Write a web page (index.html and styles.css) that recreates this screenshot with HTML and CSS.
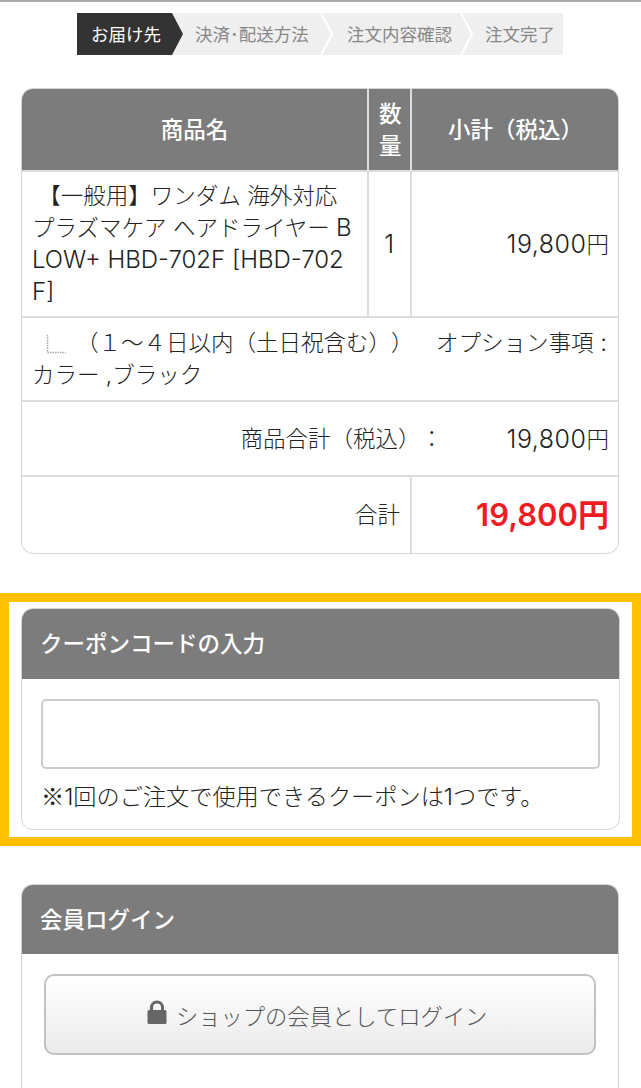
FILE: index.html
```html
<!DOCTYPE html>
<html lang="ja">
<head>
    <meta charset="UTF-8">
    <meta name="viewport" content="width=device-width, initial-scale=1.0">
    <title>ご注文手続き</title>
    <link rel="stylesheet" href="styles.css">
</head>
<body>
    <ol class="steps">
        <li class="step step-current">お届け先</li>
        <li class="step step-pay">決済･配送方法<svg class="chevron" width="14" height="42" viewBox="0 0 14 42"><path d="M1 0L12 21L1 42" fill="none" stroke="#fff" stroke-width="2"/></svg></li>
        <li class="step step-confirm">注文内容確認<svg class="chevron" width="14" height="42" viewBox="0 0 14 42"><path d="M1 0L12 21L1 42" fill="none" stroke="#fff" stroke-width="2"/></svg></li>
        <li class="step step-done">注文完了</li>
    </ol>

    <div class="cart-wrap">
        <table class="cart">
            <tr class="cart-head">
                <th class="col-name">商品名</th>
                <th class="col-qty">数量</th>
                <th class="col-price">小計（税込）</th>
            </tr>
            <tr class="row-item">
                <td class="item-name">&nbsp;【一般用】ワンダム 海外対応プラズマケア ヘアドライヤー <span class="en">B</span><span class="en">LOW+ HBD-702F [HBD-702F]</span></td>
                <td class="item-qty"><span class="digits">1</span></td>
                <td class="num"><span class="digits">19,800</span>円</td>
            </tr>
            <tr class="row-option">
                <td colspan="3"><svg class="tree" width="20" height="20" viewBox="0 0 20 20"><path d="M1.500 1V18.500H20" fill="none" stroke="#aaa" stroke-width="1.500" stroke-dasharray="1.500 1"/></svg>（１～４日以内（土日祝含む））　オプション事項<span class="en"> : </span>カラー ,ブラック</td>
            </tr>
            <tr class="row-subtotal">
                <td colspan="3">
                    <div class="sub-row">
                        <span>商品合計（税込）：</span>
                        <span class="sub-price"><span class="digits">19,800</span>円</span>
                    </div>
                </td>
            </tr>
            <tr class="row-total">
                <td colspan="2" class="num">合計</td>
                <td class="num total-price">19,800円</td>
            </tr>
        </table>
    </div>

    <div class="coupon-box">
        <section class="panel">
            <h2 class="panel-title">クーポンコードの入力</h2>
            <div class="coupon-body">
                <input type="text" class="coupon-input">
                <p class="coupon-note"><span class="mark">※</span>1回のご注文で使用できるクーポンは1つです。</p>
            </div>
        </section>
    </div>

    <section class="panel panel-login">
        <h2 class="panel-title panel-title-login">会員ログイン</h2>
        <div class="login-body">
            <button type="button" class="login-btn">
                <svg class="lock" width="20" height="24" viewBox="0 0 20 24"><path d="M3 10V7.500a7 7 0 0 1 14 0V10h-3V7.500a4 4 0 0 0-8 0V10z" fill="#666"/><rect x="0.500" y="10" width="19" height="14" rx="1.500" fill="#666"/></svg>
                ショップの会員としてログイン
            </button>
        </div>
    </section>
</body>
</html>
```

FILE: styles.css
```css
html, body {
    height: 1088px;
    overflow: hidden;
}
body {
    box-sizing: border-box;
    margin: 0;
    border-top: 2px solid #aaa;
    background: #fff;
    color: #222;
    font-family: Inter, "Noto Sans CJK JP", sans-serif;
    font-size: 22.500px;
    font-weight: 300;
    line-height: 32px;
    text-spacing-trim: space-all;
}
.en {
    font-size: 24px;
}
.digits {
    font-size: 25px;
    letter-spacing: 0.500px;
}

/* steps */
.steps {
    display: flex;
    width: 486px;
    height: 42px;
    margin: 11px 0 33px 77px;
    padding: 0;
    list-style: none;
    background: #efefef;
}
.step {
    position: relative;
    height: 42px;
    box-sizing: border-box;
    color: #888;
    font-size: 17.500px;
    font-weight: 400;
    line-height: 44px;
    white-space: nowrap;
}
.step-current {
    width: 95px;
    padding-left: 14px;
    background: #333;
    color: #fff;
}
.step-current::after {
    content: "";
    position: absolute;
    top: 0;
    left: 95px;
    border-top: 21px solid transparent;
    border-bottom: 21px solid transparent;
    border-left: 11px solid #333;
}
.step-pay {
    width: 150px;
    padding-left: 23px;
}
.step-confirm {
    width: 140px;
    padding-left: 25px;
}
.step-done {
    width: 101px;
    padding-left: 23px;
}
.chevron {
    position: absolute;
    top: 0;
    right: -12px;
}

/* cart table */
.cart-wrap {
    width: 596px;
    margin: 0 0 39px 21px;
    border: 1px solid #d5d5d5;
    border-radius: 12px;
    overflow: hidden;
}
.cart {
    width: 596px;
    table-layout: fixed;
    border-collapse: collapse;
}
.cart th, .cart td {
    padding: 0 10px;
    border: 2px solid #ddd;
    font-weight: 300;
}
.cart tr:first-child th {
    border-top: 0;
}
.cart tr:last-child td {
    border-bottom: 0;
}
.cart th:first-child, .cart td:first-child {
    border-left: 0;
}
.cart th:last-child, .cart td:last-child {
    border-right: 0;
}
.cart-head th {
    height: 81px;
    background: #7c7c7c;
    color: #fff;
    font-weight: 500;
    text-align: center;
}
.col-name {
    width: 325px;
}
.col-qty {
    width: 21px;
}
.col-price {
    width: 187px;
}
.row-item td {
    height: 144px;
}
.item-name {
    word-break: break-all;
}
.item-qty {
    text-align: center;
}
.num {
    text-align: right;
}
.row-option td {
    height: 82px;
}
.tree {
    margin: 0 10px 0 14px;
    vertical-align: -3px;
}
.cart .row-subtotal td {
    height: 71px;
    padding-top: 2px;
}
.sub-row {
    display: flex;
    justify-content: flex-end;
}
.sub-price {
    width: 166px;
    text-align: right;
}
.row-total td {
    height: 76px;
}
.cart .total-price {
    color: #f01c24;
    font-size: 31px;
    font-weight: 600;
}

/* panels */
.coupon-box {
    box-sizing: border-box;
    height: 253px;
    padding: 6px 12px;
    border: 9px solid #ffc000;
}
.panel {
    box-sizing: border-box;
    border: 1px solid #d5d5d5;
    border-radius: 12px;
    overflow: hidden;
}
.panel-title {
    height: 70px;
    margin: 0;
    padding-left: 18px;
    background: #7c7c7c;
    color: #fff;
    font-size: 22.500px;
    font-weight: 500;
    line-height: 70px;
}
.panel-title-login {
    height: 69px;
}
.coupon-body {
    box-sizing: border-box;
    height: 150px;
    padding: 20px 19px 0;
}
.coupon-input {
    display: block;
    box-sizing: border-box;
    width: 100%;
    height: 70px;
    border: 2px solid #ccc;
    border-radius: 5px;
    background: #fff;
}
.coupon-note {
    margin: 10px 0 0;
    font-size: 23.200px;
    line-height: 32px;
    white-space: nowrap;
}
.mark {
    font-family: "Noto Sans CJK JP", sans-serif;
}
.panel-login {
    width: 598px;
    height: 204px;
    margin: 38px 0 0 21px;
    border-bottom: 0;
    border-radius: 12px 12px 0 0;
}
.login-body {
    padding: 20px 22px 0;
}
.login-btn {
    display: block;
    width: 552px;
    height: 81px;
    padding: 0 8px 0 2px;
    border: 2px solid #c2c2c2;
    border-radius: 10px;
    background: linear-gradient(#fff, #ebebeb);
    color: #555;
    font-family: inherit;
    font-size: 22.300px;
    font-weight: 300;
}
.lock {
    margin-right: 3px;
    vertical-align: 1px;
}
```
